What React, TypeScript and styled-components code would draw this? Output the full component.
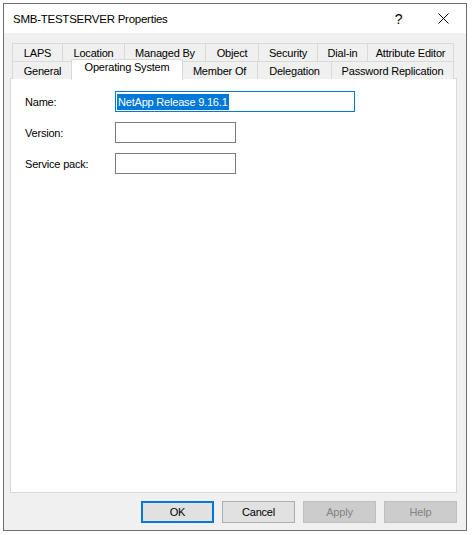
import React from "react";
import styled, { createGlobalStyle } from "styled-components";

const GlobalStyle = createGlobalStyle`
  html, body {
    margin: 0;
    padding: 0;
    background: #ffffff;
  }
  body {
    font-family: "Liberation Sans", Arial, sans-serif;
    font-size: 11px;
    letter-spacing: -0.2px;
    color: #000;
  }
`;

const Page = styled.div`
  padding: 3px 0 0 3px;
`;

const Window = styled.div`
  box-sizing: border-box;
  width: 464px;
  height: 528px;
  border: 1px solid #6f6f6f;
  background: #f0f0f0;
  display: flex;
  flex-direction: column;
`;

const TitleBar = styled.div`
  height: 29px;
  background: #ffffff;
  display: flex;
  align-items: center;
  padding-left: 9px;
`;

const Title = styled.div`
  flex: 1;
  font-size: 11.5px;
  letter-spacing: -0.25px;
  padding-top: 1px;
`;

const CaptionButton = styled.div`
  width: 45px;
  height: 29px;
  display: flex;
  align-items: center;
  justify-content: center;
  font-size: 14px;
`;

const Content = styled.div`
  flex: 1;
  padding: 10px 0 0 6px;
  display: flex;
  flex-direction: column;
`;

const TabStrip = styled.div`
  width: 442px;
  margin-left: 2px;
  display: flex;
  flex-direction: column;
  position: relative;
  z-index: 1;
`;

const TabRow = styled.div`
  display: flex;
  height: 18px;
`;

const Tab = styled.div<{ $w: number; $last?: boolean; $active?: boolean }>`
  box-sizing: border-box;
  width: ${(p) => p.$w}px;
  height: 18px;
  border-top: 1px solid #d9d9d9;
  border-left: 1px solid #d9d9d9;
  border-right: ${(p) => (p.$last ? "1px solid #d9d9d9" : "none")};
  background: #f0f0f0;
  display: flex;
  align-items: center;
  justify-content: center;
  white-space: nowrap;
  padding-top: 1px;

  ${(p) =>
    p.$active &&
    `
    position: relative;
    z-index: 2;
    width: ${p.$w + 3}px;
    height: 21px;
    margin: -2px -2px 0 -1px;
    border-right: 1px solid #d9d9d9;
    background: #ffffff;
    align-items: flex-start;
    padding-top: 1px;
  `}
`;

const Panel = styled.div`
  box-sizing: border-box;
  width: 447px;
  height: 415px;
  margin-top: -1px;
  border: 1px solid #d9d9d9;
  background: #ffffff;
  padding: 12px 0 0 14px;
  display: flex;
  flex-direction: column;
  gap: 10px;
`;

const FieldRow = styled.div`
  display: flex;
  align-items: center;
  height: 21px;
`;

const Label = styled.div`
  width: 90px;
`;

const TextBox = styled.div<{ $w: number; $focused?: boolean }>`
  box-sizing: border-box;
  width: ${(p) => p.$w}px;
  height: 21px;
  border: 1px solid ${(p) => (p.$focused ? "#0078d7" : "#7a7a7a")};
  background: #fff;
  display: flex;
  align-items: center;
  padding-left: 1px;
`;

const Selected = styled.span`
  background: #0078d7;
  color: #fff;
  line-height: 16px;
  padding: 0 1px;
  white-space: nowrap;
`;

const ButtonBar = styled.div`
  width: 447px;
  display: flex;
  justify-content: flex-end;
  gap: 8px;
  padding-top: 8px;
`;

const Button = styled.button<{ $default?: boolean }>`
  box-sizing: border-box;
  width: 73px;
  height: 22px;
  margin: 0;
  font-family: inherit;
  font-size: 11px;
  letter-spacing: -0.2px;
  color: #000;
  background: #e1e1e1;
  border: ${(p) => (p.$default ? "2px solid #0078d7" : "1px solid #adadad")};
  padding: 0;

  &:disabled {
    background: #cccccc;
    border: 1px solid #bfbfbf;
    color: #838383;
  }
`;

const row1 = [
  { label: "LAPS", w: 50 },
  { label: "Location", w: 62 },
  { label: "Managed By", w: 81 },
  { label: "Object", w: 53 },
  { label: "Security", w: 59 },
  { label: "Dial-in", w: 50 },
  { label: "Attribute Editor", w: 87 },
];

const row2 = [
  { label: "General", w: 60 },
  { label: "Operating System", w: 109, active: true },
  { label: "Member Of", w: 76 },
  { label: "Delegation", w: 74 },
  { label: "Password Replication", w: 123 },
];

export default function App() {
  return (
    <>
      <GlobalStyle />
      <Page>
        <Window>
          <TitleBar>
            <Title>SMB-TESTSERVER Properties</Title>
            <CaptionButton>?</CaptionButton>
            <CaptionButton>
              <svg width="11" height="11" viewBox="0 0 11 11">
                <path d="M0.5 0.5 L10.5 10.5 M10.5 0.5 L0.5 10.5" stroke="#000" strokeWidth="1" />
              </svg>
            </CaptionButton>
          </TitleBar>
          <Content>
            <TabStrip>
              <TabRow>
                {row1.map((t, i) => (
                  <Tab key={t.label} $w={t.w} $last={i === row1.length - 1}>
                    {t.label}
                  </Tab>
                ))}
              </TabRow>
              <TabRow>
                {row2.map((t, i) => (
                  <Tab key={t.label} $w={t.w} $last={i === row2.length - 1} $active={t.active}>
                    {t.label}
                  </Tab>
                ))}
              </TabRow>
            </TabStrip>
            <Panel>
              <FieldRow>
                <Label>Name:</Label>
                <TextBox $w={240} $focused>
                  <Selected>NetApp Release 9.16.1</Selected>
                </TextBox>
              </FieldRow>
              <FieldRow>
                <Label>Version:</Label>
                <TextBox $w={121} />
              </FieldRow>
              <FieldRow>
                <Label>Service pack:</Label>
                <TextBox $w={121} />
              </FieldRow>
            </Panel>
            <ButtonBar>
              <Button $default>OK</Button>
              <Button>Cancel</Button>
              <Button disabled>Apply</Button>
              <Button disabled>Help</Button>
            </ButtonBar>
          </Content>
        </Window>
      </Page>
    </>
  );
}
